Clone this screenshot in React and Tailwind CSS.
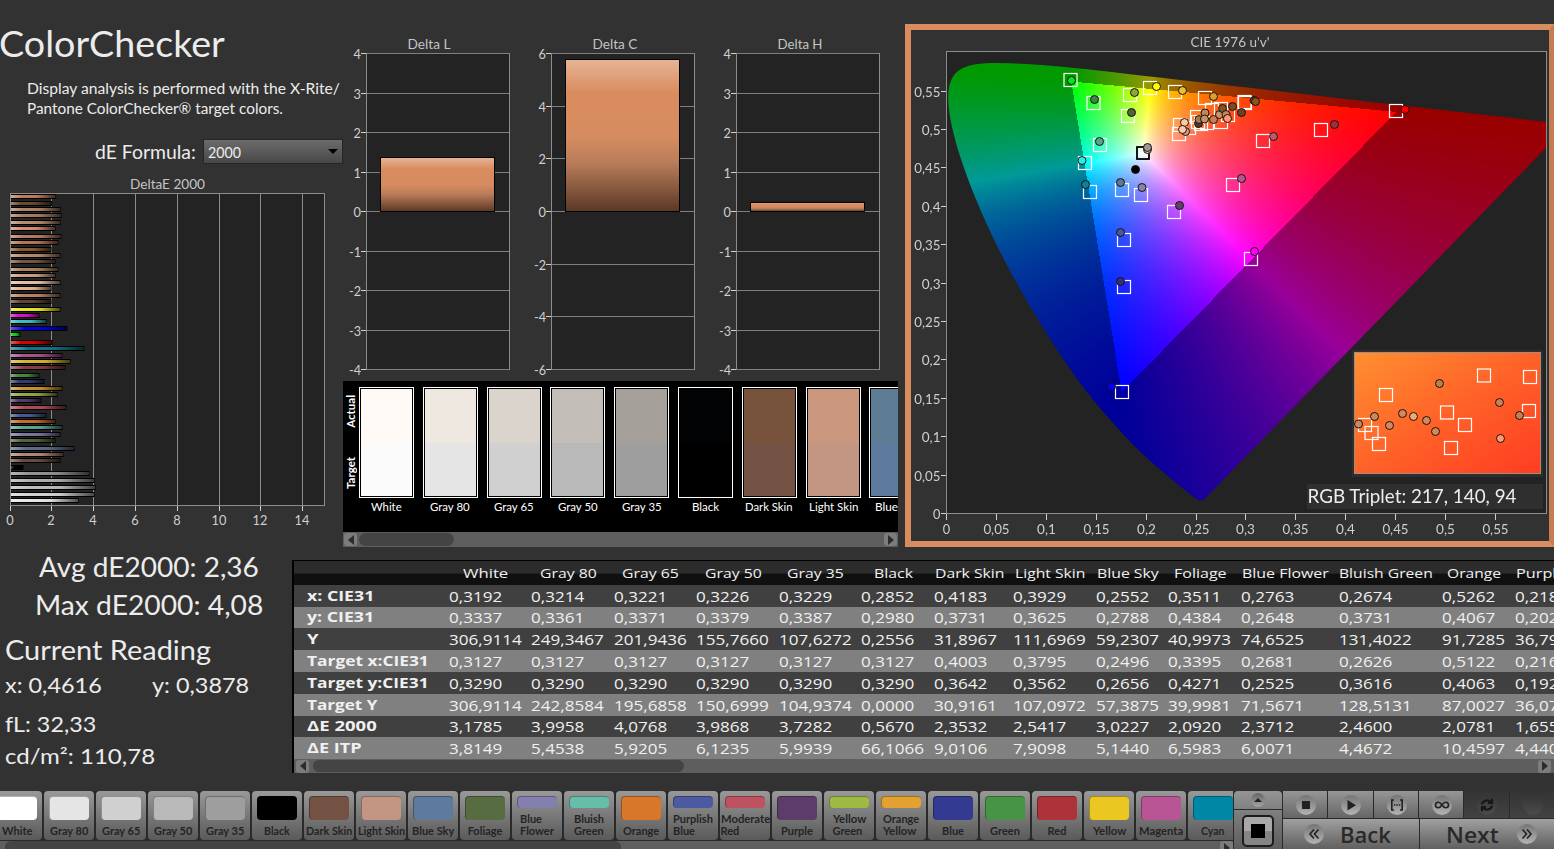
import React, { useEffect, useLayoutEffect, useRef, useState } from "react";

const deltaEBars = [
  [50, 167, "#d08a60"], [70, 155, "#7a4e30"], [88, 180, "#c09070"], [108, 183, "#b88868"],
  [127, 180, "#c89878"], [146, 165, "#f09878"], [169, 183, "#c88868"], [188, 174, "#c88058"],
  [208, 153, "#9a6030"], [226, 180, "#c89878"], [246, 165, "#806048"], [268, 174, "#c09060"],
  [288, 165, "#e0b090"], [307, 180, "#ffd0b0"], [326, 153, "#ffc8a0"], [346, 180, "#cc9070"],
  [364, 153, "#704838"], [388, 180, "#ffff20"], [406, 117, "#f010e0"], [426, 138, "#40d0d8"],
  [445, 201, "#0000f0"], [463, 60, "#20e020"], [487, 156, "#f00000"], [506, 252, "#108098"],
  [526, 186, "#b85a98"], [545, 210, "#e8c830"], [564, 195, "#984048"], [587, 117, "#4a9848"],
  [606, 132, "#384080"], [625, 186, "#e0a030"], [644, 171, "#a0b848"], [663, 123, "#604070"],
  [682, 198, "#c05060"], [706, 138, "#5060a0"], [724, 165, "#d87828"], [743, 186, "#60b8a0"],
  [763, 180, "#8880b0"], [783, 165, "#5a7040"], [805, 222, "#607898"], [824, 189, "#c09880"],
  [843, 180, "#735244"], [862, 69, "#000000"], [882, 267, "#a0a0a0"], [901, 282, "#c0c0c0"],
  [923, 285, "#d0d0d0"], [943, 282, "#e8e8e8"], [963, 234, "#ffffff"],
];

const swatches = [
  { name: "White", actual: "#fffaf5", target: "#fbfbfb", w: 31 },
  { name: "Gray 80", actual: "#eee8e1", target: "#e5e5e5", w: 40 },
  { name: "Gray 65", actual: "#dad4cd", target: "#d0d0d0", w: 40 },
  { name: "Gray 50", actual: "#c3beb8", target: "#b9b9b9", w: 40 },
  { name: "Gray 35", actual: "#a5a099", target: "#9e9e9e", w: 40 },
  { name: "Black", actual: "#020305", target: "#000000", w: 27 },
  { name: "Dark Skin", actual: "#78533c", target: "#735244", w: 48 },
  { name: "Light Skin", actual: "#cb977e", target: "#c29682", w: 49 },
  { name: "Blue Sky", actual: "#5e7d95", target: "#5e7a9c", w: 44 },
];

// name, column width, header text width, values
const columns = [
  ["White", 82.5, 45, ["0,3192", "0,3337", "306,9114", "0,3127", "0,3290", "306,9114", "3,1785", "3,8149"]],
  ["Gray 80", 82.5, 57, ["0,3214", "0,3361", "249,3467", "0,3127", "0,3290", "242,8584", "3,9958", "5,4538"]],
  ["Gray 65", 82.5, 57, ["0,3221", "0,3371", "201,9436", "0,3127", "0,3290", "195,6858", "4,0768", "5,9205"]],
  ["Gray 50", 82.5, 57, ["0,3226", "0,3379", "155,7660", "0,3127", "0,3290", "150,6999", "3,9868", "6,1235"]],
  ["Gray 35", 82.5, 57, ["0,3229", "0,3387", "107,6272", "0,3127", "0,3290", "104,9374", "3,7282", "5,9939"]],
  ["Black", 73, 39, ["0,2852", "0,2980", "0,2556", "0,3127", "0,3290", "0,0000", "0,5670", "66,1066"]],
  ["Dark Skin", 79, 69, ["0,4183", "0,3731", "31,8967", "0,4003", "0,3642", "30,9161", "2,3532", "9,0106"]],
  ["Light Skin", 82.5, 70, ["0,3929", "0,3625", "111,6969", "0,3795", "0,3562", "107,0972", "2,5417", "7,9098"]],
  ["Blue Sky", 72.5, 62, ["0,2552", "0,2788", "59,2307", "0,2496", "0,2656", "57,3875", "3,0227", "5,1440"]],
  ["Foliage", 73, 53, ["0,3511", "0,4384", "40,9973", "0,3395", "0,4271", "39,9981", "2,0920", "6,5983"]],
  ["Blue Flower", 97.5, 87, ["0,2763", "0,2648", "74,6525", "0,2681", "0,2525", "71,5671", "2,3712", "6,0071"]],
  ["Bluish Green", 103, 94, ["0,2674", "0,3731", "131,4022", "0,2626", "0,3616", "128,5131", "2,4600", "4,4672"]],
  ["Orange", 73.5, 54, ["0,5262", "0,4067", "91,7285", "0,5122", "0,4063", "87,0027", "2,0781", "10,4597"]],
  ["Purplish Blue", 110, 100, ["0,2182", "0,2027", "36,7948", "0,2164", "0,1925", "36,0724", "1,6556", "4,4403"]],
];

const rowLabels = [
  ["x: CIE31", 67], ["y: CIE31", 67], ["Y", 11], ["Target x:CIE31", 122],
  ["Target y:CIE31", 122], ["Target Y", 71], ["ΔE 2000", 70], ["ΔE ITP", 55],
];

const patches = [
  ["#ffffff", "White", 30], ["#e5e5e5", "Gray 80", 38], ["#d0d0d0", "Gray 65", 38], ["#b9b9b9", "Gray 50", 38],
  ["#9e9e9e", "Gray 35", 38], ["#000000", "Black", 26], ["#735244", "Dark Skin", 46], ["#c29682", "Light Skin", 47],
  ["#5e7a9c", "Blue Sky", 42], ["#586c42", "Foliage", 35], ["#837fae", "Blue|Flower", 34], ["#66bda8", "Bluish|Green", 30],
  ["#d87729", "Orange", 36], ["#4c5aa2", "Purplish|Blue", 40], ["#bf5261", "Moderate|Red", 49], ["#5c3d6a", "Purple", 32],
  ["#9fba40", "Yellow|Green", 33], ["#e4a12f", "Orange|Yellow", 36], ["#323b91", "Blue", 22], ["#489447", "Green", 30],
  ["#ae3239", "Red", 19], ["#ebc722", "Yellow", 33], ["#ba5595", "Magenta", 44], ["#0087a5", "Cyan", 24],
];

// CIE 1931 xy spectral locus
const locus = [
  [0.1741, 0.005], [0.1714, 0.0051], [0.1689, 0.0069], [0.1644, 0.0109], [0.1566, 0.0177], [0.144, 0.0297],
  [0.1241, 0.0578], [0.1096, 0.0868], [0.0913, 0.1327], [0.0687, 0.2007], [0.0454, 0.295], [0.0235, 0.4127],
  [0.0082, 0.5384], [0.0030, 0.6548], [0.0105, 0.7502], [0.0350, 0.816], [0.0743, 0.8338], [0.1142, 0.8262],
  [0.1547, 0.8059], [0.2296, 0.7543], [0.3016, 0.6923], [0.3731, 0.6245], [0.4441, 0.5547], [0.5125, 0.4866],
  [0.5752, 0.4242], [0.627, 0.3725], [0.6915, 0.3083], [0.7347, 0.2653],
];

const targets = [
  [1070.5, 80], [1093.5, 103], [1130, 95], [1128, 116], [1150, 88], [1175, 92], [1205, 98], [1100, 145],
  [1085, 163], [1090, 192], [1122, 190], [1141, 195], [1174, 212], [1124, 240], [1124, 287], [1122, 392],
  [1180, 125], [1179, 134], [1197, 117], [1189, 128], [1198, 122], [1201, 124], [1207, 123], [1212, 110],
  [1221, 109], [1221, 122], [1245, 103], [1244.5, 102], [1228, 115], [1263, 141], [1321, 130], [1396, 111],
  [1233, 185], [1251, 259],
];

const readings = [
  [1071.5, 80.5, "#00e820"], [1094.5, 99.5, "#388848"], [1134.5, 92.5, "#88a838"], [1131.5, 112.5, "#4a6838"],
  [1156.5, 86.5, "#ffff00"], [1182.5, 90.5, "#e8c028"], [1213.5, 96.5, "#d8a030"], [1099.5, 141.5, "#50a890"],
  [1082, 160.5, "#20f0f0"], [1085.5, 184.5, "#108098"], [1120.5, 182.5, "#607898"], [1142, 187.5, "#8880b0"],
  [1179.5, 205.5, "#604070"], [1135.5, 169.5, "#000000"], [1147.5, 149.5, "#cccccc"], [1147.5, 147.5, "#999999"],
  [1120.5, 232.5, "#4858a0"], [1120.5, 281.5, "#303080"], [1111.5, 386.5, "#0000ff"], [1184.5, 122.5, "#ffc8a0"],
  [1185.5, 131.5, "#d0a088"], [1182.5, 129.5, "#ffc8a8"], [1198.5, 123.5, "#503828"], [1199, 119.5, "#a87850"],
  [1205, 113, "#c08858"], [1204.5, 119, "#c89068"], [1213.5, 119.5, "#c88058"], [1219.5, 114.5, "#d09068"],
  [1222.5, 108.5, "#805028"], [1226, 114.5, "#c08860"], [1227.5, 118.5, "#ff9878"], [1232.5, 106.5, "#7a4a28"],
  [1241.5, 112.5, "#704028"], [1254, 100.5, "#704028"], [1255.5, 101.5, "#905020"], [1273.5, 136.5, "#c05868"],
  [1334.5, 124.5, "#a03038"], [1405, 109.5, "#ff0000"], [1241.5, 178.5, "#b05898"], [1254.5, 251.5, "#ff00ff"],
];

const insetTargets = [
  [1386, 395], [1365, 425], [1371.5, 433], [1379, 444], [1447, 412.5], [1465, 425], [1451, 448], [1484, 375.5],
  [1530, 377], [1529, 411],
];

const insetReadings = [
  [1374.5, 416.5, "#c88860"], [1358.5, 424, "#c88860"], [1389.5, 425.5, "#d08a60"], [1402.5, 413.5, "#d08a60"],
  [1413.5, 416.5, "#f0a878"], [1426.5, 420.5, "#d08a60"], [1435.5, 431.5, "#d08a60"], [1439.5, 383.5, "#b88050"],
  [1499.5, 402.5, "#c88058"], [1519.5, 415.5, "#c08050"], [1500.5, 438.5, "#ff9878"],
];

// Squeezes or stretches one line of text to a given width
const FitText = ({ width, className = "", children }) => {
  const ref = useRef(null);
  const [scale, setScale] = useState(1);

  useLayoutEffect(() => {
    setScale(width / ref.current.offsetWidth);
  }, [width, children]);

  return (
    <span className={`block shrink-0 whitespace-nowrap ${className}`} style={{ width }}>
      <span ref={ref} className="inline-block origin-left" style={{ transform: `scaleX(${scale})` }}>
        {children}
      </span>
    </span>
  );
};

const labelWidth = (text) =>
  [...text].reduce((sum, ch) => sum + (ch === "," ? 4 : ch === "-" ? 4.6 : 7.4), 0);

const AxisText = ({ x, y, anchor = "end", children }) => (
  <text
    x={x}
    y={y}
    textAnchor={anchor}
    textLength={labelWidth(children)}
    lengthAdjust="spacingAndGlyphs"
    className="fill-[#cfcfcf] text-[13px]"
  >
    {children}
  </text>
);

const DeltaEChart = () => (
  <svg viewBox="0 164 343 376" className="block h-[376px] w-[343px]">
    <defs>
      <linearGradient id="barShade" x1="0" x2="1" y1="0" y2="0">
        <stop offset="0" stopColor="#fff" stopOpacity="0.35" />
        <stop offset="0.25" stopColor="#fff" stopOpacity="0" />
        <stop offset="0.6" stopColor="#000" stopOpacity="0.05" />
        <stop offset="1" stopColor="#000" stopOpacity="0.65" />
      </linearGradient>
    </defs>
    <text x="130" y="189" textLength="75" lengthAdjust="spacingAndGlyphs" className="fill-[#c4c4c4] text-[13px]">
      DeltaE 2000
    </text>
    <rect x="10.5" y="193.5" width="314" height="312" fill="#232323" stroke="#8c8c8c" />
    {[0, 2, 4, 6, 8, 10, 12, 14].map((v) => {
      const x = Math.round(9.6 + v * 20.9) + 0.5;
      return (
        <g key={v}>
          <line x1={x} x2={x} y1="194" y2="505" stroke="#8c8c8c" />
          <line x1={x} x2={x} y1="506" y2="511" stroke="#d0d0d0" />
          <AxisText x={x - 0.5} y="525" anchor="middle">{String(v)}</AxisText>
        </g>
      );
    })}
    {deltaEBars.map(([y, end, color]) => {
      const top = Math.round(180 + y / 3 - 1.7);
      return (
        <g key={y}>
          <rect x="11" y={top - 1} width={end / 3 - 10.5} height="5" fill="#000" />
          <rect x="11" y={top} width={end / 3 - 11.5} height="3" fill={color} fillOpacity="0.9" />
          <rect x="11" y={top} width={end / 3 - 11.5} height="3" fill="url(#barShade)" />
        </g>
      );
    })}
  </svg>
);

const DeltaChart = ({ title, max, step, top }) => {
  const ticks = [];
  for (let v = max; v >= -max; v -= step) ticks.push(v);
  const yOf = (v) => Math.round(211 - (v * 158) / max) + 0.5;

  return (
    <svg viewBox="0 0 185 381" className="block h-[381px] w-[185px]">
      <defs>
        <linearGradient id="copper" x1="0" x2="0" y1="0" y2="1">
          <stop offset="0" stopColor="#e6b496" />
          <stop offset="0.22" stopColor="#d98c5e" />
          <stop offset="0.5" stopColor="#d68c60" />
          <stop offset="0.68" stopColor="#b97d5a" />
          <stop offset="1" stopColor="#5a3726" />
        </linearGradient>
      </defs>
      <text x="64.500" y="49" textLength={title === "Delta L" ? 43 : 45} lengthAdjust="spacingAndGlyphs" className="fill-[#c4c4c4] text-[13px]">
        {title}
      </text>
      <rect x="23.5" y="53.5" width="143" height="316" fill="#232323" stroke="#8c8c8c" />
      {ticks.map((v) => (
        <g key={v}>
          <line x1="24" x2="166" y1={yOf(v)} y2={yOf(v)} stroke="#808080" />
          <line x1="18" x2="23" y1={yOf(v)} y2={yOf(v)} stroke="#d0d0d0" />
          <AxisText x="18" y={yOf(v) + 5}>{String(v)}</AxisText>
        </g>
      ))}
      <rect x="37.5" y={top} width="114" height={211.5 - top} fill="url(#copper)" stroke="#000" />
    </svg>
  );
};

const U = (u) => 946.5 + u * 998;
const V = (v) => 513.5 - v * 768;

const Gamut = () => {
  const ref = useRef(null);

  useEffect(() => {
    const width = 600;
    const height = 461;
    const ctx = ref.current.getContext("2d");
    const buffer = document.createElement("canvas");
    buffer.width = width;
    buffer.height = height;
    const bctx = buffer.getContext("2d");
    const image = bctx.createImageData(width, height);
    for (let py = 0; py < height; py++) {
      for (let px = 0; px < width; px++) {
        const u = (px + 1) / 998;
        const v = Math.max((461 - py) / 768, 0.002);
        const X = (9 * u) / (4 * v);
        const Z = (12 - 3 * u - 20 * v) / (4 * v);
        const r = 3.2406 * X - 1.5372 - 0.4986 * Z;
        const g = -0.9689 * X + 1.8758 + 0.0415 * Z;
        const b = 0.0557 * X - 0.204 + 1.057 * Z;
        const peak = Math.max(r, g, b);
        // colours the display can't reach are dimmed
        const level = Math.min(r, g, b) >= 0 ? 255 : 153;
        const i = (py * width + px) * 4;
        image.data[i] = (Math.max(r, 0) / peak) * level;
        image.data[i + 1] = (Math.max(g, 0) / peak) * level;
        image.data[i + 2] = (Math.max(b, 0) / peak) * level;
        image.data[i + 3] = 255;
      }
    }
    bctx.putImageData(image, 0, 0);

    const points = locus.map(([x, y]) => {
      const d = -2 * x + 12 * y + 3;
      return [U((4 * x) / d) - 947, V((9 * y) / d) - 52];
    });
    ctx.beginPath();
    ctx.moveTo(points[0][0], points[0][1]);
    for (let i = 1; i < points.length - 1; i++) {
      const [x, y] = points[i];
      const [nx, ny] = points[i + 1];
      ctx.quadraticCurveTo(x, y, (x + nx) / 2, (y + ny) / 2);
    }
    ctx.lineTo(points[points.length - 1][0], points[points.length - 1][1]);
    ctx.closePath();
    ctx.clip();
    ctx.drawImage(buffer, 0, 0);
  }, []);

  return <canvas ref={ref} width="600" height="461" className="absolute top-[22px] left-[36px]" />;
};

const Target = ({ x, y, color = "#fff" }) => (
  <rect x={x - 6.5} y={y - 6.5} width="13" height="13" fill="none" stroke={color} strokeWidth="1.2" />
);

const Dot = ({ x, y, color }) => <circle cx={x} cy={y} r="4" fill={color} stroke="#201008" strokeWidth="1" />;

const CieChart = () => (
  <div className="relative h-[523px] w-[649px] shrink-0 border-6 border-r-5 border-[#d98c5e] border-r-[#c47c52] bg-[#323232]">
    <div className="absolute top-[22px] left-[36px] h-[461px] w-[600px] bg-[#232323]" />
    <Gamut />
    <svg viewBox="911 30 638 511" className="absolute top-0 left-0 h-[511px] w-[638px]">
      <defs>
        <linearGradient id="insetFill" x1="0" x2="1" y1="0" y2="1">
          <stop offset="0" stopColor="#ff9030" />
          <stop offset="0.5" stopColor="#ff6228" />
          <stop offset="1" stopColor="#ff3c22" />
        </linearGradient>
      </defs>
      <text x="1190.5" y="47" textLength="79" lengthAdjust="spacingAndGlyphs" className="fill-[#c4c4c4] text-[13px]">
        CIE 1976 u'v'
      </text>
      <rect x="946.5" y="51.5" width="600" height="462" fill="none" stroke="#8c8c8c" />
      {Array.from({ length: 12 }, (_, i) => {
        const label = String(i * 5 / 100).replace(".", ",");
        const x = Math.round(U(i * 0.05) - 0.5) + 0.5;
        const y = Math.round(V(i * 0.05) - 0.5) + 0.5;
        return (
          <g key={i}>
            <line x1={x} x2={x} y1="514" y2="520" stroke="#d0d0d0" />
            <line x1="941" x2="946" y1={y} y2={y} stroke="#d0d0d0" />
            <AxisText x={x} y="534" anchor="middle">{label}</AxisText>
            <AxisText x="940.5" y={y + 5.5}>{label}</AxisText>
          </g>
        );
      })}
      {targets.map(([x, y], i) => (
        <Target key={i} x={x} y={y} />
      ))}
      <rect x="1137" y="147" width="12" height="12" fill="none" stroke="#000" strokeWidth="1.8" />
      {readings.map(([x, y, color], i) => (
        <Dot key={i} x={x} y={y} color={color} />
      ))}

      <rect x="1352" y="350" width="191" height="127" fill="#2e2e2e" />
      <rect x="1354.5" y="352.5" width="186" height="121" fill="url(#insetFill)" stroke="#a58c80" />
      {insetTargets.map(([x, y], i) => (
        <Target key={i} x={x} y={y} />
      ))}
      {insetReadings.map(([x, y, color], i) => (
        <Dot key={i} x={x} y={y} color={color} />
      ))}
      <rect x="1307" y="484" width="236" height="25" fill="#2f2f2f" />
      <text x="1307.5" y="503" textLength="209" lengthAdjust="spacingAndGlyphs" className="fill-[#ececec] text-[19px]">
        RGB Triplet: 217, 140, 94
      </text>
    </svg>
  </div>
);

const ScrollArrow = ({ flip }) => (
  <span className="flex h-[13px] w-[13px] shrink-0 items-center justify-center rounded-[3px] bg-[#7c7c7c]">
    <svg viewBox="0 0 6 10" className={`h-[10px] w-[6px] ${flip ? "rotate-180" : ""}`}>
      <path d="M6 0v10L0 5z" fill="#2c2c2c" />
    </svg>
  </span>
);

const SwatchStrip = () => (
  <div className="h-[166px] w-[555px] overflow-hidden bg-black text-white">
    <div className="flex h-[151px] pt-[6px]">
      <div className="flex h-[111px] w-[16px] shrink-0 flex-col items-center justify-between pt-[8px] pb-[9px] text-[11.5px] leading-[14px] font-bold">
        <span className="rotate-180 [writing-mode:vertical-rl]">Actual</span>
        <span className="rotate-180 [writing-mode:vertical-rl]">Target</span>
      </div>
      <div className="flex gap-[8.8px]">
        {swatches.map((s) => (
          <div key={s.name} className="flex w-[55px] shrink-0 flex-col items-center">
            <div className="h-[111px] w-full border border-white">
              <div className="flex h-full flex-col border border-black/20">
                <div className="flex-1" style={{ backgroundColor: s.actual }} />
                <div className="flex-1" style={{ backgroundColor: s.target }} />
              </div>
            </div>
            <FitText width={s.w} className="mt-px text-[12px] leading-[15px]">{s.name}</FitText>
          </div>
        ))}
      </div>
    </div>
    <div className="flex h-[15px] items-center justify-between bg-[#5e5e5e] px-px">
      <div className="flex items-center gap-[2px]">
        <ScrollArrow />
        <div className="h-[13px] w-[95px] rounded-full bg-[#444]" />
      </div>
      <ScrollArrow flip />
    </div>
  </div>
);

const ReadingTable = () => (
  <div className="mt-[11px] h-[213px] w-[1262px] shrink-0 overflow-hidden border-t border-l-2 border-black font-['Open_Sans',sans-serif] text-[#f0f0f0]">
    <div className="flex h-[24px] w-[1400px] bg-linear-to-b from-[#2c2c2c] from-50% to-[#101010] to-55% pl-[155px]">
      {columns.map(([name, width, textWidth]) => (
        <div key={name} className="flex shrink-0 justify-center pr-[9.5px]" style={{ width }}>
          <FitText width={textWidth} className="text-[13px] leading-[25px]">{name}</FitText>
        </div>
      ))}
    </div>
    <div className="grid grid-rows-[22px_21px_22px_22px_22px_22px_21px_22px]">
      {rowLabels.map(([label, labelW], row) => (
        <div
          key={label}
          className={`flex w-[1400px] items-center ${row % 2 ? "bg-[#808080]" : "bg-[#404040]"}`}
        >
          <div className="w-[154.5px] shrink-0 pl-[13px]">
            <FitText width={labelW} className="text-[13.5px] leading-[21px] font-bold">{label}</FitText>
          </div>
          {columns.map(([name, width, , values]) => (
            <div key={name} className="shrink-0 text-[14px] leading-[21px]" style={{ width }}>
              <span className="inline-block origin-left scale-x-[1.22]">{values[row]}</span>
            </div>
          ))}
        </div>
      ))}
    </div>
    <div className="flex h-[14px] items-center justify-between bg-[#5e5e5e] pr-[3px] pl-[2px]">
      <div className="flex items-center gap-[4px]">
        <ScrollArrow />
        <div className="h-[12px] w-[371px] rounded-full bg-[#444]" />
      </div>
      <ScrollArrow flip />
    </div>
  </div>
);

const PatchButton = ({ color, name, width }) => {
  const lines = name.split("|");
  return (
    <button className="flex h-[49px] w-[50px] shrink-0 flex-col items-center rounded-[4px] bg-linear-to-b from-[#999] to-[#5a5a5a] pt-[5px]">
      <span
        className={`w-[40px] shrink-0 rounded-[4px] border-t border-l border-black/30 ${lines.length > 1 ? "h-[12px]" : "h-[24px]"}`}
        style={{ backgroundColor: color }}
      />
      {lines.length > 1 ? (
        <span className="mt-[5px] block text-left text-[11px] leading-[12px] font-bold text-[#242424]" style={{ width }}>
          <FitText width={lines[0] === "Blue" ? 22 : width}>{lines[0]}</FitText>
          <FitText width={{ Blue: 22, Red: 19, Flower: 34, Green: 30, Yellow: 33 }[lines[1]]}>{lines[1]}</FitText>
        </span>
      ) : (
        <FitText width={width} className="mt-[5px] text-[11px] leading-[12px] font-bold text-[#242424]">{name}</FitText>
      )}
    </button>
  );
};

const Ball = ({ dim, children }) => (
  <span
    className={`flex h-[20px] w-[20px] shrink-0 items-center justify-center rounded-full ${
      dim ? "bg-linear-to-b from-[#353535] to-[#4c4c4c]" : "bg-linear-to-b from-[#757575] to-[#b4b4b4]"
    }`}
  >
    <svg viewBox="0 0 20 20" className="h-[20px] w-[20px]" fill="none" stroke="#222" strokeWidth="1.6">
      {children}
    </svg>
  </span>
);

const controls = [
  <rect x="6" y="6" width="8" height="8" fill="#222" stroke="none" />,
  <path d="M6.500 5v10.500L15 10.250z" fill="#222" stroke="none" />,
  <path d="M7 5H4.800v10H7M13 5h2.200v10H13M6.800 10h1.500M9.300 10h1.500M11.800 10h1.500" />,
  <path d="M10 10C8.500 7.800 7.600 7.200 6.300 7.200a2.800 2.800 0 0 0 0 5.600C7.600 12.800 8.500 12.200 10 10s2.400-2.800 3.700-2.800a2.800 2.800 0 0 1 0 5.600C12.400 12.800 11.500 12.200 10 10z" />,
  <path d="M5 9.500a5 4.500 0 0 1 8.500-2.800M15 3.800v4h-4M15 10.500a5 4.500 0 0 1-8.500 2.800M5 16.200v-4h4" stroke="#181818" strokeWidth="2.200" />,
  null,
];

const BottomBar = () => (
  <div className="mt-[18px] flex h-[58px] shrink-0 overflow-hidden bg-[#2a2a2a]">
    <div className="flex w-[1233px] shrink-0 flex-col overflow-hidden">
      <div className="-ml-[8px] flex h-[49px] gap-[2px]">
        {patches.map(([color, name, width]) => (
          <PatchButton key={name} color={color} name={name} width={width} />
        ))}
      </div>
      <div className="mt-px flex h-[15px] items-start justify-between bg-[#5e5e5e]">
        <div className="ml-[5px] h-[15px] w-[616px] rounded-[6px] bg-[#444]" />
        <ScrollArrow flip />
      </div>
    </div>

    <div className="ml-px flex w-[48px] shrink-0 flex-col gap-px">
      <div className="flex h-[18px] items-center justify-center rounded-t-[4px] bg-linear-to-b from-[#959595] to-[#808080]">
        <span className="flex h-[14px] w-[14px] items-center justify-center rounded-full bg-linear-to-b from-[#666] to-[#a5a5a5]">
          <svg viewBox="0 0 8 4" className="h-[4px] w-[8px]">
            <path d="M0 4L4 0l4 4z" fill="#222" />
          </svg>
        </span>
      </div>
      <div className="flex flex-1 justify-center bg-linear-to-b from-[#808080] to-[#5c5c5c] pt-[5px]">
        <span className="flex h-[32px] w-[32px] items-center justify-center rounded-[5px] border-2 border-[#1c1c1c] bg-linear-to-b from-[#a8a8a8] from-50% to-[#858585] to-52%">
          <span className="h-[14px] w-[14px] bg-black" />
        </span>
      </div>
    </div>

    <div className="ml-px flex flex-1 flex-col gap-px">
      <div className="flex h-[30px] gap-px">
        {controls.map((icon, i) => (
          <div
            key={i}
            className={`flex flex-1 items-center justify-center pl-[2px] ${
              i > 3 ? "bg-linear-to-b from-[#343434] to-[#424242]" : "bg-linear-to-b from-[#969696] to-[#666]"
            }`}
          >
            <Ball dim={i > 3}>{icon}</Ball>
          </div>
        ))}
      </div>
      <div className="flex h-[30px] gap-px font-['Open_Sans',sans-serif] text-[22px] leading-[30px] font-semibold text-[#292929]">
        <button className="flex w-[136px] items-center bg-linear-to-b from-[#a0a0a0] to-[#606060] pl-[21px]">
          <Ball>
            <path d="M10 5.500L6 10l4 4.500M14.500 5.500L10.500 10l4 4.500" />
          </Ball>
          <FitText width={51} className="ml-[16px] text-left">Back</FitText>
        </button>
        <button className="flex flex-1 items-center bg-linear-to-b from-[#a0a0a0] to-[#606060] pl-[26px]">
          <FitText width={53} className="text-left">Next</FitText>
          <span className="ml-[18px]">
            <Ball>
              <path d="M5.500 5.500L9.500 10l-4 4.500M10 5.500L14 10l-4 4.500" />
            </Ball>
          </span>
        </button>
      </div>
    </div>
  </div>
);

const App = () => {
  return (
    <div className="flex h-[849px] w-[1554px] flex-col overflow-hidden bg-[#323232] font-['Lato',sans-serif] text-[#ececec]">
      <div className="flex h-[549px] shrink-0">
        {/* Heading and dE summary chart */}
        <div className="w-[343px] shrink-0 pt-[21px]">
          <FitText width={226} className="-ml-px h-[57px] text-[37px] leading-[44px]">ColorChecker</FitText>
          <div className="pl-[26.5px] text-[15.500px] leading-[20px]">
            <FitText width={313}>Display analysis is performed with the X-Rite/</FitText>
            <FitText width={256}>Pantone ColorChecker® target colors.</FitText>
          </div>
          <div className="mt-[21px] flex h-[25px] items-center pl-[95px]">
            <FitText width={101} className="text-[19px] leading-[26px]">dE Formula:</FitText>
            <div className="ml-[7px] flex h-[25px] w-[140px] items-center justify-between border border-[#252525] bg-linear-to-b from-[#6c6c6c] to-[#484848] pr-[4px] pl-[4px]">
              <FitText width={33} className="text-[15.500px] leading-[24px]">2000</FitText>
              <svg viewBox="0 0 10 5" className="h-[5px] w-[10px]">
                <path d="M0 0h10L5 5z" fill="#000" />
              </svg>
            </div>
          </div>
          <DeltaEChart />
        </div>

        <div className="w-[562px] shrink-0">
          <div className="flex">
            <DeltaChart title="Delta L" max={4} step={1} top={157.5} />
            <DeltaChart title="Delta C" max={6} step={2} top={59.5} />
            <DeltaChart title="Delta H" max={4} step={1} top={202.5} />
          </div>
          <SwatchStrip />
        </div>

        <div className="pt-[24px]">
          <CieChart />
        </div>
      </div>

      <div className="flex h-[224px] shrink-0">
        {/* Current measurement */}
        <div className="w-[292px] shrink-0 text-[21px] leading-[28px]">
          <FitText width={220} className="mt-px ml-[38.5px] text-[26px] leading-[34px]">Avg dE2000: 2,36</FitText>
          <FitText width={228} className="mt-[4px] ml-[34.5px] text-[26px] leading-[34px]">Max dE2000: 4,08</FitText>
          <FitText width={206} className="mt-[11px] ml-[4.5px] text-[26px] leading-[34px]">Current Reading</FitText>
          <div className="mt-[4px] flex gap-[50px] pl-[5px]">
            <FitText width={97}>x: 0,4616</FitText>
            <FitText width={97}>y: 0,3878</FitText>
          </div>
          <FitText width={91} className="mt-[11px] ml-[5px]">fL: 32,33</FitText>
          <FitText width={150} className="mt-[4px] ml-[5px]">cd/m²: 110,78</FitText>
        </div>
        <ReadingTable />
      </div>

      <BottomBar />
    </div>
  );
};

export default App;
